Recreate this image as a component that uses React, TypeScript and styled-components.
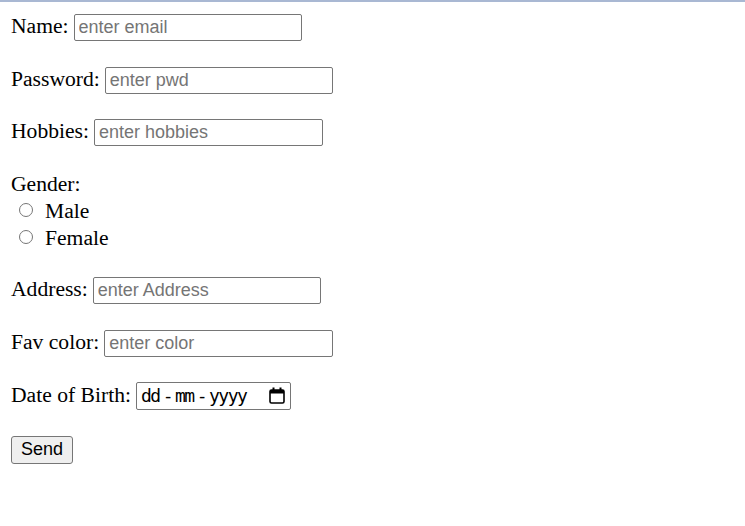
import React from "react";
import styled, { createGlobalStyle } from "styled-components";

const Global = createGlobalStyle`
  html, body { margin: 0; padding: 0; background: #fff; }
  body { font-family: "Liberation Serif", "Times New Roman", serif; font-size: 21.6px; color: #000; }
`;

const TopRule = styled.div`
  height: 2px;
  background: #a9b8d3;
`;

const Form = styled.form`
  display: flex;
  flex-direction: column;
  padding: 12px 11px 0 11px;
`;

const Row = styled.div<{ $gap?: number }>`
  display: flex;
  align-items: baseline;
  gap: 5px;
  height: 27px;
  margin-bottom: ${(p) => (p.$gap ?? 25.5)}px;
`;

const Label = styled.label`
  white-space: nowrap;
`;

const TextInput = styled.input<{ $w?: number }>`
  box-sizing: border-box;
  width: ${(p) => p.$w ?? 228}px;
  height: 27px;
  margin: 0;
  padding: 1px 4px;
  border: 1px solid #767676;
  border-radius: 2px;
  font-family: "Liberation Sans", Arial, sans-serif;
  font-size: 18px;
  color: #000;
  background: #fff;
  &::placeholder { color: #757575; opacity: 1; }
`;

const Group = styled.div`
  display: flex;
  flex-direction: column;
  margin-bottom: 25.5px;
`;

const Line = styled.div`
  display: flex;
  align-items: center;
  height: 27px;
`;

const RadioLine = styled.label`
  display: flex;
  align-items: center;
  height: 27px;
`;

const Radio = styled.span`
  box-sizing: border-box;
  width: 14px;
  height: 14px;
  border: 1px solid #767676;
  border-radius: 50%;
  background: #fff;
  margin: -3px 12px 0 8px;
`;

const DateBox = styled.div`
  box-sizing: border-box;
  width: 155px;
  height: 28px;
  border: 1px solid #767676;
  border-radius: 2px;
  display: flex;
  align-items: center;
  justify-content: space-between;
  padding: 0 5px 0 4px;
  align-self: center;
`;

const DateText = styled.span`
  display: flex;
  font-family: "DejaVu Sans Mono", monospace;
  font-size: 18px;
  letter-spacing: -1.5px;
  color: #000;
`;

const Dash = styled.span`
  margin: 0 3px;
`;

const DateRow = styled.div`
  display: flex;
  align-items: center;
  gap: 5px;
  height: 28px;
  margin-bottom: 26px;
`;

const Button = styled.button`
  align-self: flex-start;
  box-sizing: border-box;
  width: 62px;
  height: 28px;
  padding: 0;
  border: 1px solid #767676;
  border-radius: 3px;
  background: #efefef;
  font-family: "Liberation Sans", Arial, sans-serif;
  font-size: 18px;
  color: #000;
`;

const Calendar = () => (
  <svg width="16" height="17" viewBox="0 0 16 17">
    <rect x="1" y="3" width="14" height="13" rx="1.5" fill="none" stroke="#000" strokeWidth="1.6" />
    <rect x="1" y="3" width="14" height="3.5" fill="#000" />
    <rect x="3.5" y="0.5" width="2" height="3" fill="#000" />
    <rect x="10.5" y="0.5" width="2" height="3" fill="#000" />
  </svg>
);

export default function App() {
  return (
    <>
      <Global />
      <TopRule />
      <Form onSubmit={(e) => e.preventDefault()}>
        <Row>
          <Label>Name:</Label>
          <TextInput $w={228} placeholder="enter email" />
        </Row>
        <Row>
          <Label>Password:</Label>
          <TextInput $w={228} placeholder="enter pwd" />
        </Row>
        <Row $gap={24.5}>
          <Label>Hobbies:</Label>
          <TextInput $w={229} placeholder="enter hobbies" />
        </Row>
        <Group>
          <Line>Gender:</Line>
          <RadioLine>
            <Radio />
            Male
          </RadioLine>
          <RadioLine>
            <Radio />
            Female
          </RadioLine>
        </Group>
        <Row>
          <Label>Address:</Label>
          <TextInput $w={228} placeholder="enter Address" />
        </Row>
        <Row $gap={25}>
          <Label>Fav color:</Label>
          <TextInput $w={229} placeholder="enter color" />
        </Row>
        <DateRow>
          <Label>Date of Birth:</Label>
          <DateBox>
            <DateText>
              dd<Dash>-</Dash>mm<Dash>-</Dash>yyyy
            </DateText>
            <Calendar />
          </DateBox>
        </DateRow>
        <Button type="submit">Send</Button>
      </Form>
    </>
  );
}
